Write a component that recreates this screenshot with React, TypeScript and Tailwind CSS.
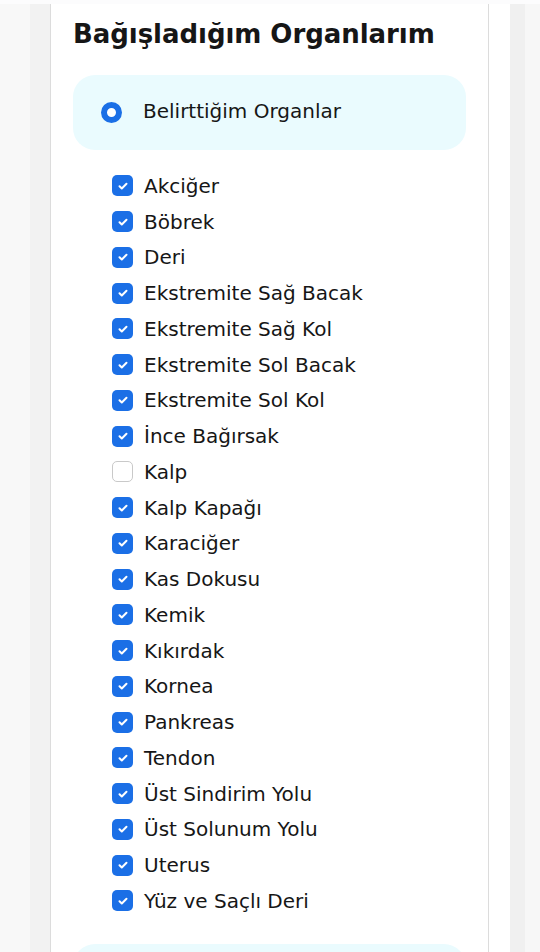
import React, { useState } from "react";

const organlar = [
  { ad: "Akciğer", secili: true },
  { ad: "Böbrek", secili: true },
  { ad: "Deri", secili: true },
  { ad: "Ekstremite Sağ Bacak", secili: true },
  { ad: "Ekstremite Sağ Kol", secili: true },
  { ad: "Ekstremite Sol Bacak", secili: true },
  { ad: "Ekstremite Sol Kol", secili: true },
  { ad: "İnce Bağırsak", secili: true },
  { ad: "Kalp", secili: false },
  { ad: "Kalp Kapağı", secili: true },
  { ad: "Karaciğer", secili: true },
  { ad: "Kas Dokusu", secili: true },
  { ad: "Kemik", secili: true },
  { ad: "Kıkırdak", secili: true },
  { ad: "Kornea", secili: true },
  { ad: "Pankreas", secili: true },
  { ad: "Tendon", secili: true },
  { ad: "Üst Sindirim Yolu", secili: true },
  { ad: "Üst Solunum Yolu", secili: true },
  { ad: "Uterus", secili: true },
  { ad: "Yüz ve Saçlı Deri", secili: true },
];

function Checkbox({ checked }: { checked: boolean }) {
  if (!checked) {
    return <span className="w-[21px] h-[21px] rounded-[5px] border border-[#c9c9c9] bg-white shrink-0" />;
  }
  return (
    <span className="w-[21px] h-[21px] rounded-[5px] bg-[#1b6fe6] flex items-center justify-center shrink-0">
      <svg width="12" height="12" viewBox="0 0 12 12" fill="none">
        <path d="M2.5 6.2l2.3 2.3 4.7-4.8" stroke="white" strokeWidth="2" strokeLinecap="round" strokeLinejoin="round" />
      </svg>
    </span>
  );
}

export default function App() {
  const [rows] = useState(organlar);

  return (
    <div className="w-[540px] h-[952px] overflow-hidden flex flex-col bg-[#f8f8f8] text-[#161616]" style={{ fontFamily: "'DejaVu Sans', sans-serif" }}>
      <div className="h-[4px] bg-[#fcfcfd] shrink-0" />
      <div className="flex flex-1">
        <div className="w-[30px] bg-[#f8f8f8]" />
        <div className="w-[20px] bg-[#f2f2f2]" />
        <div className="w-[439px] bg-white border-x border-[#dcdcdc] pt-[10px] px-[22px]">
          <h2 className="text-[26px] font-bold leading-[40px] tracking-[-0.05px]">Bağışladığım Organlarım</h2>
          <div className="mt-[21px] h-[75px] rounded-[22px] bg-[#eafbfe] flex items-center pl-[28px]">
            <span className="w-[21px] h-[21px] rounded-full border-[6px] border-[#1b6fe6] bg-white shrink-0" />
            <span className="ml-[21px] text-[20px] -mt-[4px]">Belirttiğim Organlar</span>
          </div>
          <ul className="mt-[18px] pl-[39px]">
            {rows.map((r) => (
              <li key={r.ad} className="h-[35.75px] flex items-center gap-[11px]">
                <Checkbox checked={r.secili} />
                <span className="text-[20px] leading-none">{r.ad}</span>
              </li>
            ))}
          </ul>
          <div className="mt-[25px] h-[60px] rounded-[22px] bg-[#eafbfe]" />
        </div>
        <div className="w-[21px] bg-white" />
        <div className="w-[15px] bg-[#f0f0f0]" />
        <div className="flex-1 bg-[#f7f7f7]" />
      </div>
    </div>
  );
}
